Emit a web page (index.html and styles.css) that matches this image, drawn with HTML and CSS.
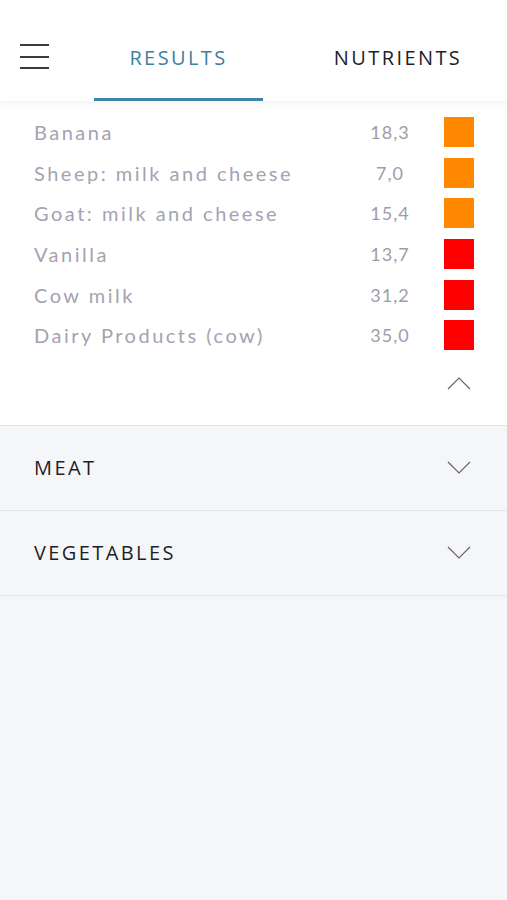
FILE: index.html
```html
<!DOCTYPE html>
<html lang="en">
<head>
    <meta charset="UTF-8">
    <meta name="viewport" content="width=device-width, initial-scale=1.0">
    <title>Results</title>
    <link rel="stylesheet" href="styles.css">
</head>
<body>
    <header id="topBar">
        <button class="menuBtn" aria-label="Menu">
            <span></span><span></span><span></span>
        </button>
        <nav class="tabs">
            <div class="tab active">RESULTS</div>
            <div class="tab">NUTRIENTS</div>
        </nav>
    </header>

    <section class="group open">
        <ul class="itemList">
            <li class="item"><span class="name">Banana</span><span class="value">18,3</span><span class="swatch medium"></span></li>
            <li class="item"><span class="name">Sheep: milk and cheese</span><span class="value">7,0</span><span class="swatch medium"></span></li>
            <li class="item"><span class="name">Goat: milk and cheese</span><span class="value">15,4</span><span class="swatch medium"></span></li>
            <li class="item"><span class="name">Vanilla</span><span class="value">13,7</span><span class="swatch high"></span></li>
            <li class="item"><span class="name">Cow milk</span><span class="value">31,2</span><span class="swatch high"></span></li>
            <li class="item"><span class="name">Dairy Products (cow)</span><span class="value">35,0</span><span class="swatch high"></span></li>
        </ul>
        <div class="collapseRow">
            <svg class="chevron" width="24" height="14" viewBox="0 0 24 14"><path d="M1 13 L12 2 L23 13" fill="none" stroke="#666" stroke-width="1.2"/></svg>
        </div>
    </section>

    <section class="group">
        <div class="groupHead">
            <span>MEAT</span>
            <svg class="chevron" width="24" height="14" viewBox="0 0 24 14"><path d="M1 1 L12 12 L23 1" fill="none" stroke="#666" stroke-width="1.2"/></svg>
        </div>
    </section>
    <section class="group">
        <div class="groupHead">
            <span>VEGETABLES</span>
            <svg class="chevron" width="24" height="14" viewBox="0 0 24 14"><path d="M1 1 L12 12 L23 1" fill="none" stroke="#666" stroke-width="1.2"/></svg>
        </div>
    </section>
</body>
</html>
```

FILE: styles.css
```css
* {
    margin: 0;
    padding: 0;
    box-sizing: border-box;
}
body {
    font-family: Lato, "Open Sans", sans-serif;
    background-color: #f5f6f8;
    color: #222;
    min-height: 900px;
}
#topBar {
    position: relative;
    z-index: 2;
    height: 101px;
    background: #fff;
    display: flex;
    align-items: stretch;
    box-shadow: 0 2px 8px rgba(0, 0, 0, 0.06);
}
.menuBtn {
    width: 94px;
    background: none;
    border: none;
    display: flex;
    flex-direction: column;
    justify-content: center;
    gap: 9.5px;
    padding: 12px 0 0 20px;
}
.menuBtn span {
    display: block;
    width: 29px;
    height: 2px;
    background: #3a3a44;
}
.tabs {
    flex: 1;
    display: flex;
}
.tab {
    display: flex;
    align-items: center;
    justify-content: center;
    font-family: "Open Sans", sans-serif;
    font-size: 20px;
    letter-spacing: 2.4px;
    color: #1e1e2a;
    border-bottom: 3px solid transparent;
    padding-top: 16px;
}
.tab:first-child {
    width: 169px;
}
.tab:last-child {
    flex: 1;
    padding-left: 26px;
}
.tab.active {
    color: #3d7f9e;
    border-bottom-color: #3d84a8;
}
.group {
    background: #f5f6f8;
    border-bottom: 1px solid #e4e5e9;
}
.group.open {
    background: #fff;
}
.itemList {
    list-style: none;
    padding: 11px 33px 0 34px;
}
.item {
    height: 40.6px;
    display: flex;
    align-items: center;
}
.name {
    flex: 1;
    font-size: 20px;
    letter-spacing: 2.5px;
    color: #a3a3b2;
}
.value {
    width: 60px;
    text-align: center;
    font-size: 18px;
    letter-spacing: 1px;
    color: #9d9daa;
    margin-right: 24px;
}
.swatch {
    width: 30px;
    height: 30px;
}
.swatch.medium {
    background: #ff8800;
}
.swatch.high {
    background: #ff0000;
}
.collapseRow {
    height: 69px;
    display: flex;
    justify-content: flex-end;
    padding: 20px 36px 0 0;
}
.groupHead {
    height: 84px;
    display: flex;
    align-items: center;
    justify-content: space-between;
    padding: 0 36px 0 34px;
    font-family: "Open Sans", sans-serif;
    font-size: 20px;
    letter-spacing: 2.4px;
    color: #1e1e2a;
}
```
